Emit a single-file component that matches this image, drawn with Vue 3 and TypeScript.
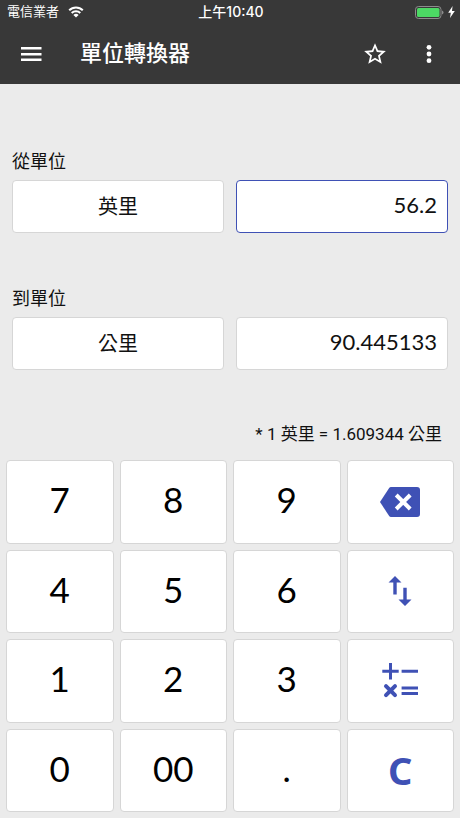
<script setup lang="ts">
import { computed, ref } from 'vue'

interface Unit {
  id: string
  name: string
  metres: number
}

const units: Unit[] = [
  { id: 'mi', name: '英里', metres: 1609.344 },
  { id: 'km', name: '公里', metres: 1000 },
]

type Action = 'delete' | 'swap' | 'operators' | 'clear'
type Key = { digit: string } | { action: Action; label: string }

const keys: Key[] = [
  { digit: '7' }, { digit: '8' }, { digit: '9' }, { action: 'delete', label: '刪除' },
  { digit: '4' }, { digit: '5' }, { digit: '6' }, { action: 'swap', label: '交換單位' },
  { digit: '1' }, { digit: '2' }, { digit: '3' }, { action: 'operators', label: '計算' },
  { digit: '0' }, { digit: '00' }, { digit: '.' }, { action: 'clear', label: '清除' },
]

const fromId = ref('mi')
const toId = ref('km')
const amount = ref('56.2')
const starred = ref(false)

const unitOf = (id: string): Unit => units.find((u) => u.id === id) ?? units[0]
const from = computed(() => unitOf(fromId.value))
const to = computed(() => unitOf(toId.value))
const trim = (n: number): string => String(Number(n.toFixed(6)))
const rate = computed(() => from.value.metres / to.value.metres)
const result = computed(() => trim((Number(amount.value) || 0) * rate.value))
const note = computed(() => `* 1 ${from.value.name} = ${trim(rate.value)} ${to.value.name}`)

function press(key: Key): void {
  if ('digit' in key) {
    if (key.digit === '.' && amount.value.includes('.')) return
    amount.value = amount.value === '0' && key.digit !== '.' ? key.digit : amount.value + key.digit
  } else if (key.action === 'delete') {
    amount.value = amount.value.slice(0, -1) || '0'
  } else if (key.action === 'clear') {
    amount.value = '0'
  } else if (key.action === 'swap') {
    const previous = fromId.value
    fromId.value = toId.value
    toId.value = previous
  }
}
</script>

<template>
  <div class="app">
    <header class="top">
      <div class="status">
        <div class="carrier">
          <span>電信業者</span>
          <svg class="wifi" viewBox="0 0 16 12" aria-hidden="true">
            <path d="M1.2 4.3a9.6 9.6 0 0 1 13.6 0M3.7 7a6.1 6.1 0 0 1 8.6 0" />
            <path class="solid" d="M8 11.6 5.4 9a3.7 3.7 0 0 1 5.2 0z" />
          </svg>
        </div>
        <span class="clock">上午10:40</span>
        <div class="power">
          <svg class="battery" viewBox="0 0 29 13" aria-hidden="true">
            <rect class="shell" x=".5" y=".5" width="25.500" height="12" rx="3" />
            <rect class="charge" x="2" y="2" width="22.500" height="9" rx="1.500" />
            <path class="cap" d="M27 4.500q1.500.3 1.500 2t-1.500 2z" />
          </svg>
          <svg class="bolt" viewBox="0 0 7 12" aria-hidden="true">
            <path d="M4.600 0 .2 6.700h2.600L2 12l4.800-7H4z" />
          </svg>
        </div>
      </div>
      <div class="bar">
        <button class="icon" type="button" aria-label="選單">
          <svg viewBox="0 0 28 28" aria-hidden="true">
            <path d="M4 7h20.500v2.400H4zM4 13h20.500v2.400H4zM4 18.600h20.500V21H4z" />
          </svg>
        </button>
        <h1>單位轉換器</h1>
        <button class="icon star" type="button" aria-label="收藏" :aria-pressed="starred" @click="starred = !starred">
          <svg viewBox="0 0 24 24" aria-hidden="true">
            <path d="M22 9.240l-7.190-.62L12 2 9.190 8.630 2 9.240l5.460 4.730L5.820 21 12 17.270 18.180 21l-1.630-7.030L22 9.240zM12 15.400l-3.760 2.270 1-4.280-3.320-2.880 4.380-.38L12 6.100l1.710 4.040 4.380.38-3.320 2.880 1 4.280L12 15.400z" />
          </svg>
        </button>
        <button class="icon" type="button" aria-label="更多">
          <svg viewBox="0 0 28 28" aria-hidden="true">
            <circle cx="14" cy="7.300" r="2.400" />
            <circle cx="14" cy="14" r="2.400" />
            <circle cx="14" cy="20.700" r="2.400" />
          </svg>
        </button>
      </div>
    </header>

    <main>
      <form class="form" @submit.prevent>
        <div class="group">
          <label for="from-unit">從單位</label>
          <div class="fields">
            <select id="from-unit" v-model="fromId" class="field">
              <option v-for="u in units" :key="u.id" :value="u.id">{{ u.name }}</option>
            </select>
            <input v-model="amount" class="field number active" type="text" inputmode="decimal" aria-label="從數值" />
          </div>
        </div>
        <div class="group">
          <label for="to-unit">到單位</label>
          <div class="fields">
            <select id="to-unit" v-model="toId" class="field">
              <option v-for="u in units" :key="u.id" :value="u.id">{{ u.name }}</option>
            </select>
            <input :value="result" class="field number" type="text" readonly aria-label="到數值" />
          </div>
        </div>
        <p class="note">{{ note }}</p>
      </form>

      <div class="keypad">
        <template v-for="(key, i) in keys" :key="i">
          <button v-if="'digit' in key" class="key digit" type="button" @click="press(key)">{{ key.digit }}</button>
          <button v-else class="key action" type="button" :aria-label="key.label" @click="press(key)">
            <svg v-if="key.action === 'delete'" class="delete" viewBox="0 0 40 30" aria-hidden="true">
              <path d="M11 0h26q3 0 3 3v24q0 3-3 3H11q-1.200 0-2-1.200L0 15 9 1.200Q9.800 0 11 0z" />
              <path class="cross" d="M16.200 8l14 14M30.200 8l-14 14" />
            </svg>
            <svg v-else-if="key.action === 'swap'" class="swap" viewBox="0 0 24 30" aria-hidden="true">
              <path d="M7 0l6.500 6.500H8.700V18.500H5.300V6.500H.5zM17 30l-6.500-6.500h4.800V11.800h3.400v11.700h4.800z" />
            </svg>
            <svg v-else-if="key.action === 'operators'" class="operators" viewBox="0 0 36 36" aria-hidden="true">
              <path d="M.3 8.300h16.400M8.500 0v16.400M19.600 8.300H36" />
              <path class="round" d="M4 23.200l9 9M13 23.200l-9 9" />
              <path d="M19.600 25H36M19.600 30.500H36" />
            </svg>
            <span v-else class="clear">C</span>
          </button>
        </template>
      </div>
    </main>
  </div>
</template>

<style>
body {
  margin: 0;
  background: #ebebeb;
}
</style>

<style scoped>
.app {
  display: flex;
  flex-direction: column;
  min-height: 100vh;
  background: #ebebeb;
  color: #111;
  font-family: Roboto, "Noto Sans CJK TC", sans-serif;
}

.app * {
  box-sizing: border-box;
}

button,
input,
select {
  margin: 0;
  padding: 0;
  color: inherit;
  font: inherit;
}

.top {
  background: #383838;
  color: #fff;
}

.status {
  display: grid;
  grid-template-columns: 1fr auto 1fr;
  align-items: center;
  height: 24px;
  padding: 0 5px 0 7px;
  font-size: 13px;
  line-height: 24px;
}

.carrier,
.power {
  display: flex;
  align-items: center;
  gap: 9px;
}

.power {
  justify-content: flex-end;
  gap: 4px;
}

.clock {
  font-family: Inter, "Noto Sans CJK TC", sans-serif;
  font-size: 14px;
  font-weight: 500;
}

.wifi {
  width: 16px;
  height: 12px;
  fill: none;
  stroke: #fff;
  stroke-width: 2;
}

.wifi .solid {
  fill: #fff;
  stroke: none;
}

.battery {
  width: 29px;
  height: 13px;
}

.shell {
  fill: none;
  stroke: #8c8c8c;
}

.charge {
  fill: #4cd964;
}

.cap {
  fill: #8c8c8c;
}

.bolt {
  width: 7px;
  height: 12px;
  fill: #fff;
}

.bar {
  display: flex;
  align-items: center;
  height: 60px;
  padding: 0 17px;
}

.icon {
  width: 28px;
  height: 28px;
  border: 0;
  background: none;
}

.icon + .icon {
  margin-left: 26px;
}

.icon svg {
  display: block;
  width: 100%;
  height: 100%;
  fill: #fff;
}

.star {
  padding: 1px;
}

h1 {
  flex: 1;
  margin: 0 0 0 35px;
  font-size: 22px;
  font-weight: 500;
  line-height: 32px;
}

main {
  display: flex;
  flex: 1;
  flex-direction: column;
}

.form {
  padding: 66px 12px 0;
}

.group {
  margin-bottom: 54px;
}

.group label {
  display: block;
  margin-bottom: 6px;
  font-size: 18px;
  line-height: 24px;
}

.fields {
  display: grid;
  grid-template-columns: 1fr 1fr;
  gap: 12px;
}

.field {
  width: 100%;
  min-width: 0;
  height: 53px;
  border: 1px solid #d6d6d6;
  border-radius: 4px;
  outline: 0;
  background: #fff;
  font-size: 20px;
}

select.field {
  appearance: none;
  text-align: center;
  text-align-last: center;
}

.number {
  padding: 0 10px 4px;
  font-family: Lato, sans-serif;
  font-size: 22px;
  text-align: right;
}

.active {
  border-color: #3f51b5;
}

.note {
  margin: -2px 6px 0 0;
  font-size: 17px;
  line-height: 24px;
  text-align: right;
}

.keypad {
  display: grid;
  flex: 1;
  grid-template-columns: repeat(4, 1fr);
  grid-auto-rows: 1fr;
  gap: 6px;
  padding: 14px 6px 6px;
}

.key {
  display: flex;
  align-items: center;
  justify-content: center;
  min-height: 48px;
  border: 1px solid #d6d6d6;
  border-radius: 4px;
  background: #fff;
  color: #000;
  font-family: Lato, sans-serif;
  font-size: 35px;
  line-height: 40px;
}

.digit {
  padding-bottom: 5px;
}

.action {
  color: #3f51b5;
}

.action svg {
  fill: #3f51b5;
}

.delete {
  width: 40px;
  height: 30px;
}

.action .cross {
  fill: none;
  stroke: #fff;
  stroke-width: 4;
}

.swap {
  width: 24px;
  height: 30px;
}

.operators {
  width: 36px;
  height: 36px;
  stroke: #3f51b5;
  stroke-width: 3;
}

.operators .round {
  stroke-linecap: round;
  stroke-width: 4;
}

.clear {
  font-family: "Noto Sans", sans-serif;
  font-size: 38px;
  font-weight: 700;
}
</style>
